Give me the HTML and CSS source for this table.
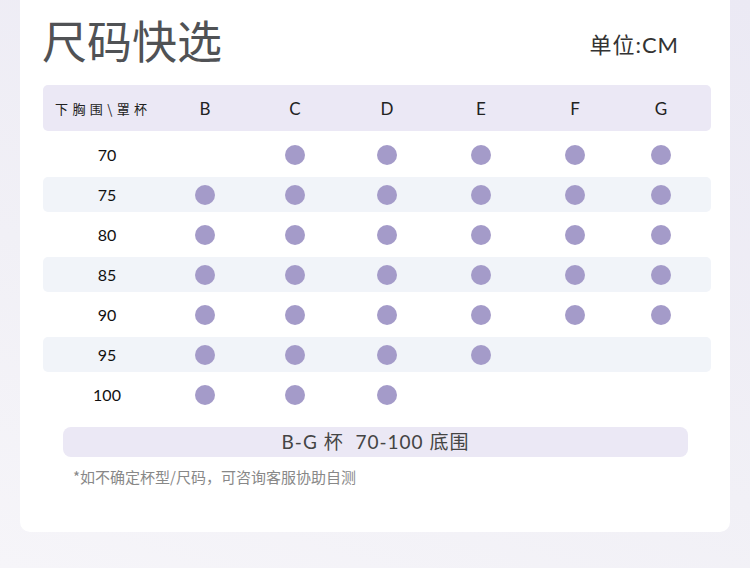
FILE: index.html
```html
<!DOCTYPE html>
<html lang="zh">
<head>
<meta charset="utf-8">
<link rel="stylesheet" href="styles.css">
</head>
<body>
<div class="card">
  <div class="top">
    <h1 class="title">尺码快选</h1>
    <div class="unit">单位:CM</div>
  </div>
  <div class="table">
    <div class="row head">
      <div class="hlabel">下胸围\罩杯</div>
      <div class="c">B</div><div class="c">C</div><div class="c">D</div><div class="c">E</div><div class="c">F</div><div class="c">G</div>
    </div>
    <div class="row">
      <div class="num">70</div>
      <div class="c"></div><div class="c"><i class="dot"></i></div><div class="c"><i class="dot"></i></div><div class="c"><i class="dot"></i></div><div class="c"><i class="dot"></i></div><div class="c"><i class="dot"></i></div>
    </div>
    <div class="row alt">
      <div class="num">75</div>
      <div class="c"><i class="dot"></i></div><div class="c"><i class="dot"></i></div><div class="c"><i class="dot"></i></div><div class="c"><i class="dot"></i></div><div class="c"><i class="dot"></i></div><div class="c"><i class="dot"></i></div>
    </div>
    <div class="row">
      <div class="num">80</div>
      <div class="c"><i class="dot"></i></div><div class="c"><i class="dot"></i></div><div class="c"><i class="dot"></i></div><div class="c"><i class="dot"></i></div><div class="c"><i class="dot"></i></div><div class="c"><i class="dot"></i></div>
    </div>
    <div class="row alt">
      <div class="num">85</div>
      <div class="c"><i class="dot"></i></div><div class="c"><i class="dot"></i></div><div class="c"><i class="dot"></i></div><div class="c"><i class="dot"></i></div><div class="c"><i class="dot"></i></div><div class="c"><i class="dot"></i></div>
    </div>
    <div class="row">
      <div class="num">90</div>
      <div class="c"><i class="dot"></i></div><div class="c"><i class="dot"></i></div><div class="c"><i class="dot"></i></div><div class="c"><i class="dot"></i></div><div class="c"><i class="dot"></i></div><div class="c"><i class="dot"></i></div>
    </div>
    <div class="row alt">
      <div class="num">95</div>
      <div class="c"><i class="dot"></i></div><div class="c"><i class="dot"></i></div><div class="c"><i class="dot"></i></div><div class="c"><i class="dot"></i></div><div class="c"></div><div class="c"></div>
    </div>
    <div class="row">
      <div class="num">100</div>
      <div class="c"><i class="dot"></i></div><div class="c"><i class="dot"></i></div><div class="c"><i class="dot"></i></div><div class="c"></div><div class="c"></div><div class="c"></div>
    </div>
  </div>
  <div class="pill">B-G 杯&nbsp; 70-100 底围</div>
  <p class="note">*如不确定杯型/尺码，可咨询客服协助自测</p>
</div>
</body>
</html>
```

FILE: styles.css
```css
* { box-sizing: border-box; }
html, body { margin: 0; padding: 0; }
body {
  width: 750px;
  height: 568px;
  overflow: hidden;
  background: linear-gradient(20deg, #f6f5f9 0%, #f1f0f6 40%, #ebe9f4 100%);
  font-family: "Lato", "Noto Sans CJK SC", sans-serif;
}
.card {
  margin: -20px 20px 0 20px;
  height: 552px;
  background: #fff;
  border-radius: 10px;
  padding: 33px 18px 0 23px;
}
.top {
  display: flex;
  align-items: flex-start;
  justify-content: space-between;
  height: 65px;
}
.title {
  margin: 0 0 0 -1px;
  font-family: "Noto Sans CJK SC", sans-serif;
  font-weight: 400;
  font-size: 45px;
  line-height: 1.2;
  color: #505255;
}
.unit {
  font-family: "Lato", "Noto Sans CJK SC", sans-serif;
  font-size: 22px;
  line-height: 26px;
  letter-spacing: 1px;
  color: #333;
  margin-right: 33px;
  margin-top: 19px;
}
.table {
  display: flex;
  flex-direction: column;
  gap: 5px;
  margin-top: 7px;
  width: 668px;
}
.row {
  display: grid;
  grid-template-columns: 128px 68px 112px 72px 116px 72px 1fr;
  align-items: center;
  height: 35px;
  border-radius: 5px;
}
.row.head {
  height: 46px;
  background: #ebe8f5;
  margin-bottom: 1px;
}
.row.alt { background: #f1f4f9; }
.hlabel {
  padding-left: 12px;
  font-family: "Noto Sans CJK SC", sans-serif;
  font-size: 13px;
  letter-spacing: 4.4px;
  color: #222;
  white-space: nowrap;
}
.c {
  display: flex;
  justify-content: center;
  align-items: center;
  font-size: 17px;
  color: #222;
}
.num {
  text-align: center;
  font-size: 16px;
  color: #111;
}
.dot {
  display: block;
  width: 20px;
  height: 20px;
  border-radius: 50%;
  background: #a49bc9;
}
.pill {
  margin: 15px 0 0 20px;
  width: 625px;
  height: 30px;
  border-radius: 8px;
  background: #ebe8f5;
  text-align: center;
  font-family: "Lato", "Noto Sans CJK SC", sans-serif;
  font-size: 19px;
  line-height: 30px;
  letter-spacing: 1px;
  color: #444;
}
.note {
  margin: 9px 0 0 30px;
  font-family: "Noto Sans CJK SC", sans-serif;
  font-size: 15px;
  color: #888;
  letter-spacing: 0;
}
```
